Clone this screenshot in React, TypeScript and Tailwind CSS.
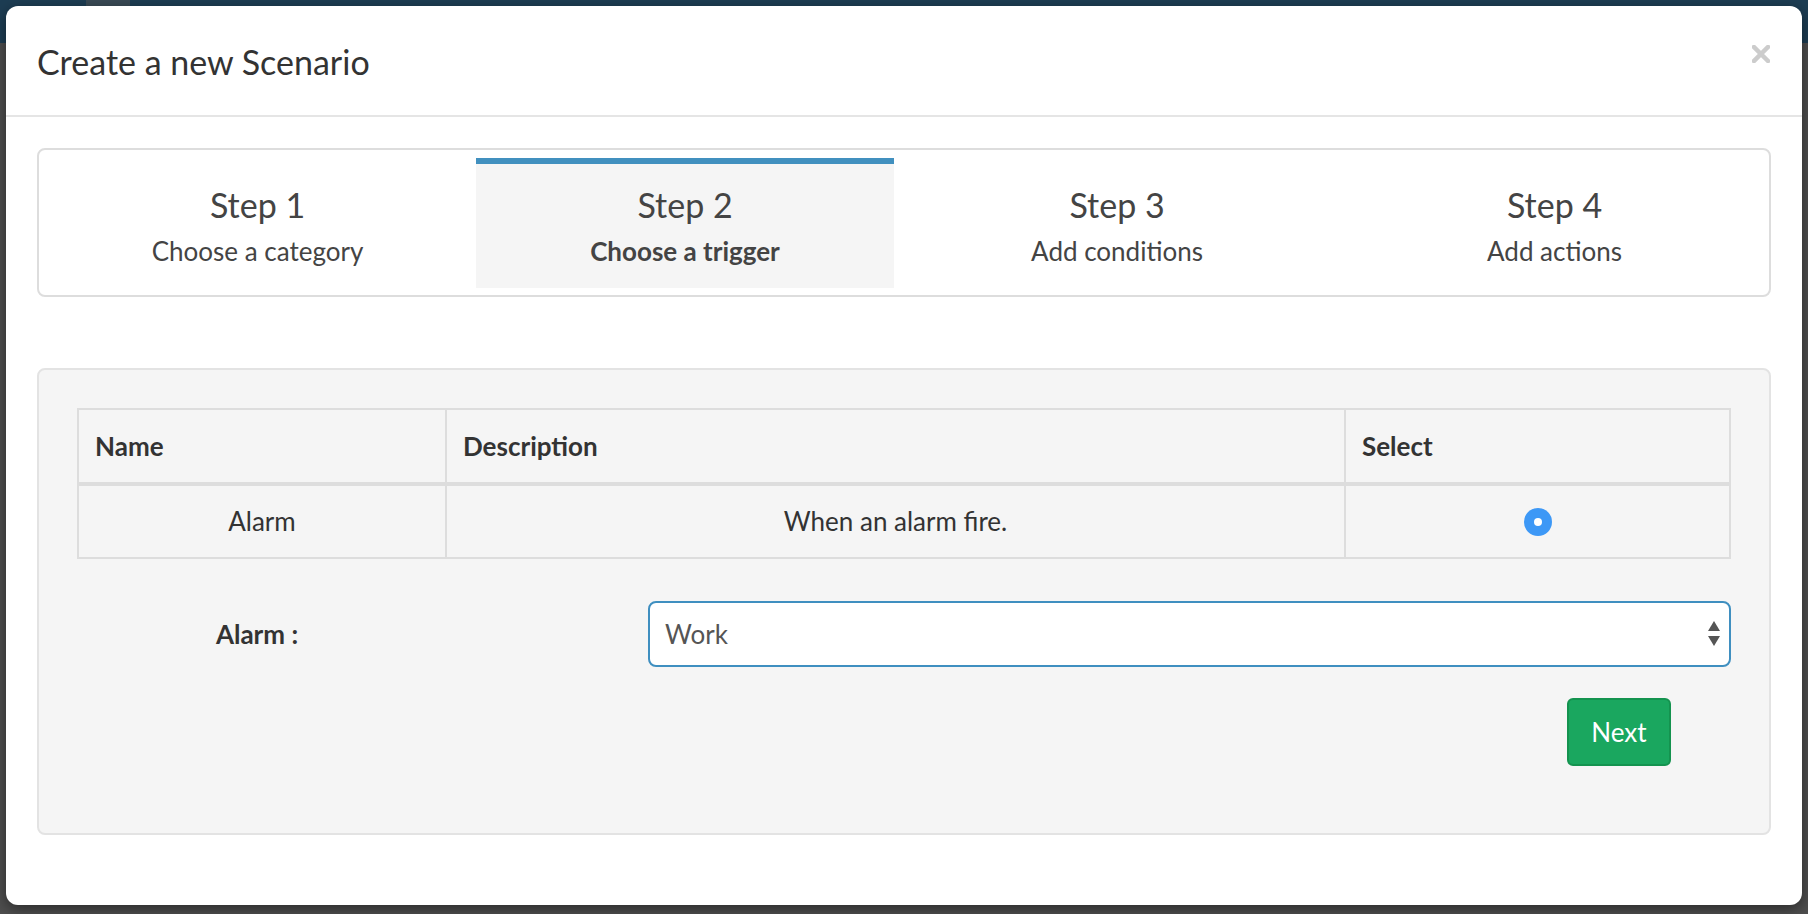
import React from 'react';

const steps = [
  { title: 'Step 1', sub: 'Choose a category', width: 'w-[437px]' },
  { title: 'Step 2', sub: 'Choose a trigger', width: 'w-[418px]', active: true },
  { title: 'Step 3', sub: 'Add conditions', width: 'w-[446px]' },
  { title: 'Step 4', sub: 'Add actions', width: 'flex-1' },
];

const font = { fontFamily: 'Lato, "Noto Sans", sans-serif' };

const App: React.FC = () => {
  return (
    <div className="relative h-[914px] w-[1808px] overflow-hidden bg-[#4e4e4e]" style={font}>
      {/* page behind the overlay */}
      <div className="h-[43px] bg-[#1d3d53]" />
      <div className="absolute left-[86px] top-0 h-[6px] w-[44px] bg-[#3a4a55]" />

      {/* modal */}
      <div className="absolute left-[6px] top-[6px] flex h-[899px] w-[1796px] flex-col rounded-[12px] bg-white shadow-[0_4px_14px_rgba(0,0,0,0.45)]">
        <div className="flex h-[111px] items-start justify-between border-b-2 border-[#e5e5e5] pl-[31px] pr-[32px] pt-[36px]">
          <h4 className="text-[34px] leading-[40px] text-[#333333]">Create a new Scenario</h4>
          <svg width="18" height="18" viewBox="0 0 18 18" className="mt-[3px]">
            <path d="M2 2 L16 16 M16 2 L2 16" stroke="#cccccc" strokeWidth="4.5" strokeLinecap="square" />
          </svg>
        </div>

        <div className="flex flex-col px-[31px] pt-[31px]">
          {/* wizard steps */}
          <div className="flex h-[149px] rounded-[8px] border-2 border-[#dddddd] pb-[7px] pt-[8px]">
            {steps.map(step => (
              <div
                key={step.title}
                className={
                  step.width +
                  ' flex h-[130px] flex-col items-center text-[#444444] ' +
                  (step.active ? 'border-t-[6px] border-[#4190bf] bg-[#f5f5f5] pt-[21px]' : 'pt-[27px]')
                }
              >
                <div className="text-[34px] leading-[40px]">{step.title}</div>
                <div className={'mt-[9px] text-[26px] leading-[34px] ' + (step.active ? 'font-bold' : '')}>{step.sub}</div>
              </div>
            ))}
          </div>

          {/* trigger panel */}
          <div className="mt-[71px] h-[467px] rounded-[8px] border-2 border-[#e3e3e3] bg-[#f5f5f5] p-[38px] text-[26px] text-[#333333]">
            <div className="border-2 border-[#dddddd]">
              <div className="flex h-[76px] border-b-4 border-[#dddddd] font-bold">
                <div className="flex w-[368px] items-center border-r-2 border-[#dddddd] px-[16px]">Name</div>
                <div className="flex flex-1 items-center border-r-2 border-[#dddddd] px-[16px]">Description</div>
                <div className="flex w-[383px] items-center px-[16px]">Select</div>
              </div>
              <div className="flex h-[71px]">
                <div className="flex w-[368px] items-center justify-center border-r-2 border-[#dddddd]">Alarm</div>
                <div className="flex flex-1 items-center justify-center border-r-2 border-[#dddddd]">When an alarm fire.</div>
                <div className="flex w-[383px] items-center justify-center">
                  <svg width="28" height="28" viewBox="0 0 28 28">
                    <circle cx="14" cy="14" r="14" fill="#3d98f6" />
                    <circle cx="14" cy="14" r="4" fill="#ffffff" />
                  </svg>
                </div>
              </div>
            </div>

            <div className="mt-[42px] flex h-[66px] items-center">
              <label className="w-[360px] text-center font-bold">Alarm :</label>
              <div className="ml-[211px] flex h-[66px] flex-1 items-center justify-between rounded-[8px] border-2 border-[#3f8fc0] bg-white pl-[15px] pr-[9px] text-[#555555]">
                <span>Work</span>
                <svg width="12" height="26" viewBox="0 0 12 26">
                  <path d="M6 0 L12 10 L0 10 Z" fill="#555555" />
                  <path d="M0 15 L12 15 L6 25 Z" fill="#555555" />
                </svg>
              </div>
            </div>

            <div className="mt-[31px] flex justify-end pr-[60px]">
              <button className="flex h-[68px] w-[104px] items-center justify-center rounded-[6px] border-2 border-[#14934f] bg-[#1aa75f] text-white">
                Next
              </button>
            </div>
          </div>
        </div>
      </div>
    </div>
  );
};

export default App;
